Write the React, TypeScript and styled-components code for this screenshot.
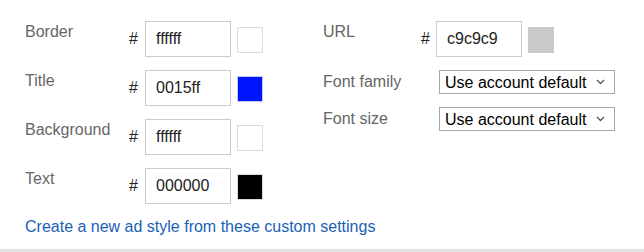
import React from 'react';
import styled, { createGlobalStyle } from 'styled-components';

const LABEL_GREY = '#666';
const FIELD_BORDER = '#ccc';
const LINK_BLUE = '#1a61b5';

const GlobalStyle = createGlobalStyle`
    body {
        margin: 0;
        background: #fff;
        font-family: "Liberation Sans", Arial, sans-serif;
        font-size: 16px;
    }
`;

const Panel = styled.div`
    width: 644px;
    height: 252px;
    box-sizing: border-box;
    padding: 21px 0 0 25px;
    border-bottom: 3px solid #e2e2e2;
    display: flex;
    flex-direction: column;
`;

const Columns = styled.div`
    display: flex;
`;

const Column = styled.div<{ $width: number }>`
    width: ${({ $width }) => $width}px;
    display: flex;
    flex-direction: column;
    gap: 13px;
`;

const Row = styled.div<{ $center?: boolean }>`
    display: flex;
    align-items: ${({ $center }) => ($center ? 'center' : 'flex-start')};
`;

const Label = styled.div<{ $width: number; $center?: boolean }>`
    width: ${({ $width }) => $width}px;
    flex-shrink: 0;
    padding-top: ${({ $center }) => ($center ? 0 : 2)}px;
    color: ${LABEL_GREY};
    line-height: 18px;
`;

const Picker = styled.div`
    display: flex;
    align-items: center;
`;

const Hash = styled.span<{ $width: number }>`
    width: ${({ $width }) => $width}px;
    color: #222;
`;

const HexInput = styled.input`
    width: 86px;
    height: 36px;
    box-sizing: border-box;
    padding: 0 0 0 10px;
    border: 1px solid ${FIELD_BORDER};
    border-radius: 0;
    font: inherit;
    color: #222;
    outline: none;
`;

const Swatch = styled.div<{ $color: string; $edge: string }>`
    width: 26px;
    height: 26px;
    box-sizing: border-box;
    margin: 2px 0 0 6px;
    background: ${({ $color }) => $color};
    border: 1px solid ${({ $edge }) => $edge};
`;

const SelectWrap = styled.div`
    position: relative;
    width: 176px;
`;

const Select = styled.select`
    width: 176px;
    height: 24px;
    box-sizing: border-box;
    padding: 0 0 0 5px;
    border: 1px solid #a6a6a6;
    border-radius: 0;
    background: #fff;
    appearance: none;
    font: inherit;
    color: #000;
    outline: none;
`;

const Chevron = styled.svg`
    position: absolute;
    right: 10px;
    top: 9px;
    pointer-events: none;
`;

const CreateLink = styled.a`
    margin-top: 14px;
    color: ${LINK_BLUE};
    text-decoration: none;
    line-height: 18px;
    cursor: pointer;
`;

type ColorField = { label: string; value: string; color: string; edge: string };

const leftFields: ColorField[] = [
    { label: 'Border', value: 'ffffff', color: '#ffffff', edge: '#dcdcdc' },
    { label: 'Title', value: '0015ff', color: '#0015ff', edge: '#c8ccf5' },
    { label: 'Background', value: 'ffffff', color: '#ffffff', edge: '#dcdcdc' },
    { label: 'Text', value: '000000', color: '#000000', edge: '#dcdcdc' },
];

const ColorRow: React.FC<{ field: ColorField; labelWidth: number; hashWidth: number }> = ({
    field,
    labelWidth,
    hashWidth,
}) => (
    <Row>
        <Label $width={labelWidth}>{field.label}</Label>
        <Picker>
            <Hash $width={hashWidth}>#</Hash>
            <HexInput defaultValue={field.value} />
            <Swatch $color={field.color} $edge={field.edge} />
        </Picker>
    </Row>
);

const FontSelect: React.FC<{ label: string }> = ({ label }) => (
    <Row $center>
        <Label $width={116} $center>
            {label}
        </Label>
        <SelectWrap>
            <Select defaultValue="default">
                <option value="default">Use account default</option>
            </Select>
            <Chevron width="9" height="6" viewBox="0 0 9 6">
                <path d="M1 1l3.5 3.5L8 1" fill="none" stroke="#555" strokeWidth="1.3" />
            </Chevron>
        </SelectWrap>
    </Row>
);

export default function App() {
    return (
        <>
            <GlobalStyle />
            <Panel>
                <Columns>
                    <Column $width={298}>
                        {leftFields.map((f) => (
                            <ColorRow key={f.label} field={f} labelWidth={104} hashWidth={16} />
                        ))}
                    </Column>
                    <Column $width={300}>
                        <ColorRow
                            field={{ label: 'URL', value: 'c9c9c9', color: '#c9c9c9', edge: '#c9c9c9' }}
                            labelWidth={98}
                            hashWidth={15}
                        />
                        <FontSelect label="Font family" />
                        <FontSelect label="Font size" />
                    </Column>
                </Columns>
                <CreateLink>Create a new ad style from these custom settings</CreateLink>
            </Panel>
        </>
    );
}
